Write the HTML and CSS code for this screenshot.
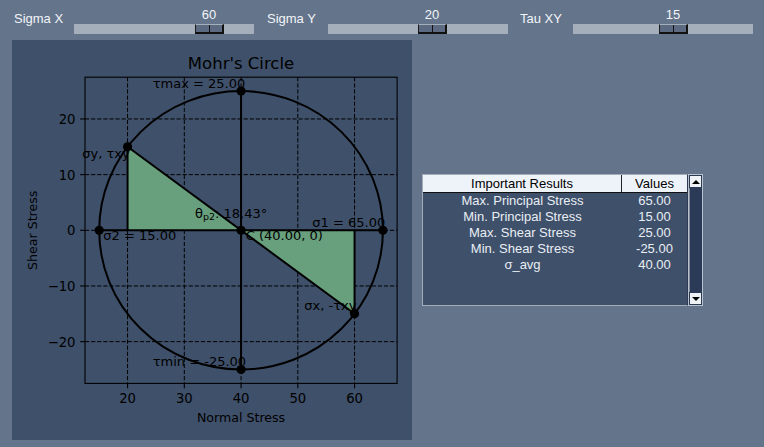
FILE: index.html
```html
<!DOCTYPE html>
<html lang="en">
<head>
<meta charset="utf-8">
<title>Mohr's Circle</title>
<link rel="stylesheet" href="styles.css">
</head>
<body>
<div class="topbar">
  <span class="lbl lbl-x">Sigma X</span>
  <div class="slider">
    <div class="trough"></div>
    <div class="thumb" style="left:121px"><span class="val">60</span></div>
  </div>
  <span class="lbl lbl-y">Sigma Y</span>
  <div class="slider">
    <div class="trough"></div>
    <div class="thumb" style="left:90px"><span class="val">20</span></div>
  </div>
  <span class="lbl lbl-t">Tau XY</span>
  <div class="slider">
    <div class="trough"></div>
    <div class="thumb" style="left:86px"><span class="val">15</span></div>
  </div>
</div>

<div class="main">
  <div class="panel">
    <svg class="plot" width="400" height="400" viewBox="0 0 400 400">
      <text class="title" x="229" y="28.7">Mohr's Circle</text>

      <g class="grid">
        <line x1="115.56" y1="37.2" x2="115.56" y2="343.4"/>
        <line x1="172.31" y1="37.2" x2="172.31" y2="343.4"/>
        <line x1="229.06" y1="37.2" x2="229.06" y2="343.4"/>
        <line x1="285.81" y1="37.2" x2="285.81" y2="343.4"/>
        <line x1="342.56" y1="37.2" x2="342.56" y2="343.4"/>
        <line x1="73" y1="78.96" x2="385.1" y2="78.96"/>
        <line x1="73" y1="134.63" x2="385.1" y2="134.63"/>
        <line x1="73" y1="190.3" x2="385.1" y2="190.3"/>
        <line x1="73" y1="245.97" x2="385.1" y2="245.97"/>
        <line x1="73" y1="301.64" x2="385.1" y2="301.64"/>
      </g>

      <polygon class="fill" points="115.56,106.8 115.56,190.3 229.06,190.3"/>
      <polygon class="fill" points="342.56,273.8 342.56,190.3 229.06,190.3"/>

      <ellipse class="circle" cx="229.06" cy="190.3" rx="141.88" ry="139.18"/>

      <g class="lines">
        <line x1="87.19" y1="190.3" x2="370.94" y2="190.3"/>
        <line x1="229.06" y1="51.12" x2="229.06" y2="329.48"/>
        <line x1="115.56" y1="106.8" x2="342.56" y2="273.8"/>
        <line x1="115.56" y1="106.8" x2="115.56" y2="190.3"/>
        <line x1="342.56" y1="273.8" x2="342.56" y2="190.3"/>
      </g>

      <g class="dots">
        <circle cx="87.19" cy="190.3" r="4.6"/>
        <circle cx="370.94" cy="190.3" r="4.6"/>
        <circle cx="229.06" cy="51.12" r="4.6"/>
        <circle cx="229.06" cy="329.48" r="4.6"/>
        <circle cx="229.06" cy="190.3" r="4.6"/>
        <circle cx="115.56" cy="106.8" r="4.6"/>
        <circle cx="342.56" cy="273.8" r="4.6"/>
      </g>

      <rect class="frame" x="73" y="37.2" width="312.1" height="306.2"/>

      <g class="ticks">
        <line x1="68.1" y1="78.96" x2="73" y2="78.96"/>
        <line x1="68.1" y1="134.63" x2="73" y2="134.63"/>
        <line x1="68.1" y1="190.3" x2="73" y2="190.3"/>
        <line x1="68.1" y1="245.97" x2="73" y2="245.97"/>
        <line x1="68.1" y1="301.64" x2="73" y2="301.64"/>
        <line x1="115.56" y1="343.4" x2="115.56" y2="348.3"/>
        <line x1="172.31" y1="343.4" x2="172.31" y2="348.3"/>
        <line x1="229.06" y1="343.4" x2="229.06" y2="348.3"/>
        <line x1="285.81" y1="343.4" x2="285.81" y2="348.3"/>
        <line x1="342.56" y1="343.4" x2="342.56" y2="348.3"/>
      </g>

      <g class="ylabels">
        <text x="63.5" y="84">20</text>
        <text x="63.5" y="139.6">10</text>
        <text x="63.5" y="195.3">0</text>
        <text x="63.5" y="251">−10</text>
        <text x="63.5" y="306.6">−20</text>
      </g>
      <g class="xlabels">
        <text x="115.56" y="362.7">20</text>
        <text x="172.31" y="362.7">30</text>
        <text x="229.06" y="362.7">40</text>
        <text x="285.81" y="362.7">50</text>
        <text x="342.56" y="362.7">60</text>
      </g>

      <text class="axlabel" x="229.06" y="381.7">Normal Stress</text>
      <text class="axlabel" x="24.7" y="190.3" transform="rotate(-90 24.7 190.3)">Shear Stress</text>

      <g class="notes">
        <text x="140.7" y="48">τmax = 25.00</text>
        <text x="70.3" y="117.7">σy, τxy</text>
        <text x="183" y="178.3">θ<tspan class="sub" dy="2">p2</tspan><tspan dy="-2">: 18.43°</tspan></text>
        <text x="300.3" y="186.7">σ1 = 65.00</text>
        <text x="91.3" y="200">σ2 = 15.00</text>
        <text x="233.7" y="200">C (40.00, 0)</text>
        <text x="292.3" y="269.5">σx, -τxy</text>
        <text x="140.7" y="325.7">τmin = -25.00</text>
      </g>
    </svg>
  </div>

  <div class="results">
    <div class="table">
      <div class="thead">
        <div class="th c1">Important Results</div>
        <div class="th c2">Values</div>
      </div>
      <div class="row"><span class="c1">Max. Principal Stress</span><span class="c2">65.00</span></div>
      <div class="row"><span class="c1">Min. Principal Stress</span><span class="c2">15.00</span></div>
      <div class="row"><span class="c1">Max. Shear Stress</span><span class="c2">25.00</span></div>
      <div class="row"><span class="c1">Min. Shear Stress</span><span class="c2">-25.00</span></div>
      <div class="row"><span class="c1">σ_avg</span><span class="c2">40.00</span></div>
    </div>
    <div class="scroll">
      <div class="sbtn up"><span class="tri-up"></span></div>
      <div class="strough"></div>
      <div class="sbtn down"><span class="tri-down"></span></div>
    </div>
  </div>
</div>
</body>
</html>
```

FILE: styles.css
```css
html, body {
  margin: 0;
  padding: 0;
  height: 100%;
  background: #64748b;
}
body {
  font-family: "Liberation Sans", Arial, sans-serif;
  font-size: 13px;
  color: #eef2f7;
  overflow: hidden;
}

/* top slider bar */
.topbar {
  display: flex;
  align-items: flex-start;
  height: 40px;
  box-sizing: border-box;
  padding: 6px 0 6px 14px;
}
.lbl {
  line-height: 26px;
  white-space: nowrap;
  color: #f2f5f9;
}
.lbl-x { width: 60px; }
.lbl-y { width: 61px; margin-left: 13px; }
.lbl-t { width: 53px; margin-left: 12px; }

.slider {
  position: relative;
  width: 180px;
  height: 28px;
}
.trough {
  position: absolute;
  left: 0;
  right: 0;
  top: 18px;
  height: 10px;
  background: #a5afbc;
}
.thumb {
  position: absolute;
  top: 18px;
  width: 29px;
  height: 10px;
  box-sizing: border-box;
  background: #5b6a80;
  border-top: 1px solid #a5afbc;
  border-left: 1px solid #1a1a1a;
  border-right: 2px solid #111;
  border-bottom: 2px solid #111;
}
.thumb::after {
  content: "";
  position: absolute;
  left: 13px;
  top: 0;
  bottom: 0;
  width: 1px;
  background: #111;
}
.val {
  position: absolute;
  bottom: 100%;
  left: 50%;
  margin-bottom: 1px;
  transform: translateX(-50%);
  line-height: 18px;
  color: #f2f5f9;
}

/* main area */
.main {
  display: flex;
  align-items: flex-start;
  padding-left: 12px;
}
.panel {
  width: 400px;
  height: 400px;
  background: #3f506a;
}
.plot {
  display: block;
  font-family: "DejaVu Sans", sans-serif;
}
.plot text { fill: #000; }
.title { font-size: 16.5px; text-anchor: middle; }
.grid line {
  stroke: #000;
  stroke-width: 1;
  stroke-dasharray: 4.2 1.9;
}
.fill { fill: #689f7d; stroke: none; }
.circle { fill: none; stroke: #000; stroke-width: 2; }
.lines line { stroke: #000; stroke-width: 2; }
.dots circle { fill: #000; }
.frame { fill: none; stroke: #000; stroke-width: 1.1; }
.ticks line { stroke: #000; stroke-width: 1.1; }
.ylabels text { font-size: 13.2px; text-anchor: end; }
.xlabels text { font-size: 13.2px; text-anchor: middle; }
.axlabel { font-size: 12.6px; text-anchor: middle; }
.notes text { font-size: 13px; }
.notes .sub { font-size: 9.5px; }

/* results table */
.results {
  display: flex;
  margin-left: 10px;
  margin-top: 134px;
  height: 132px;
}
.table {
  width: 266px;
  box-sizing: border-box;
  border: 1px solid #a3acb8;
  border-right: 1px solid #2e3b52;
  background: #3f506a;
}
.thead {
  display: flex;
  height: 18px;
  box-sizing: border-box;
  background: #eef3f9;
  border-bottom: 1px solid #111;
  color: #000;
}
.th {
  line-height: 17px;
  text-align: center;
}
.th.c1 { width: 198px; border-right: 1px solid #222; }
.th.c2 { flex: 1; }
.row {
  display: flex;
  line-height: 16px;
  color: #e9eef5;
}
.row .c1 { width: 199px; text-align: center; }
.row .c2 { flex: 1; text-align: center; }

.scroll {
  width: 15px;
  box-sizing: border-box;
  border: 1px solid #b9c1cc;
  display: flex;
  flex-direction: column;
  background: #2b3b57;
}
.sbtn {
  height: 11px;
  background: #eef2f7;
  border: 1px solid #2b3b57;
  display: flex;
  align-items: center;
  justify-content: center;
}
.strough {
  flex: 1;
  background: #2b3b57;
  border-left: 1px solid #7e8a9c;
}
.tri-up {
  width: 0;
  height: 0;
  border-left: 4px solid transparent;
  border-right: 4px solid transparent;
  border-bottom: 4px solid #000;
}
.tri-down {
  width: 0;
  height: 0;
  border-left: 4px solid transparent;
  border-right: 4px solid transparent;
  border-top: 4px solid #000;
}
```
